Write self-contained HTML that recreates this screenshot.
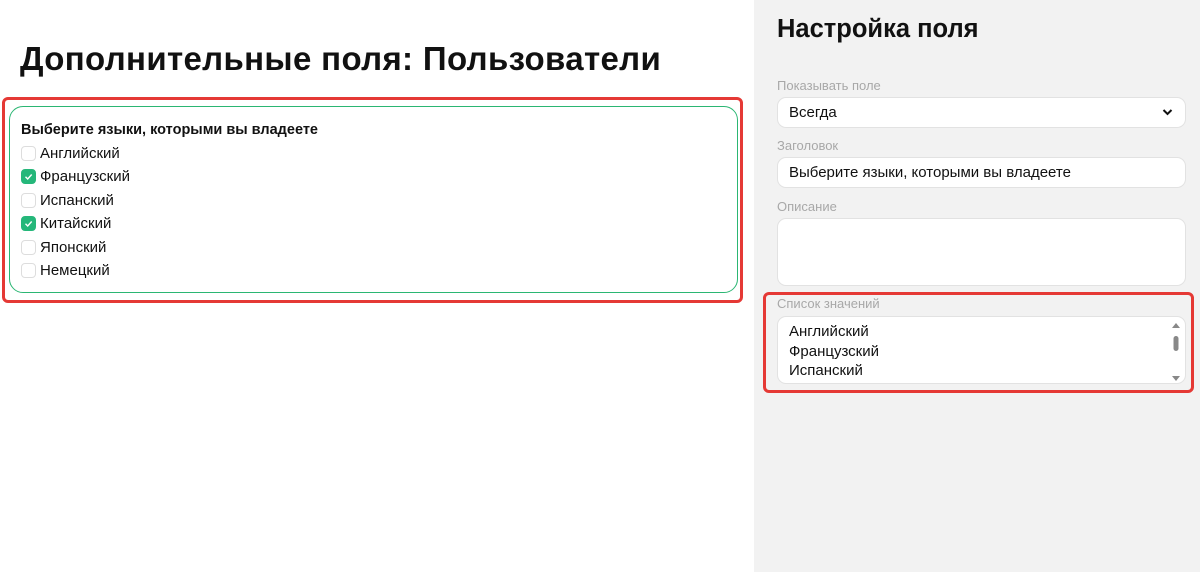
<!DOCTYPE html>
<html><head><meta charset="utf-8"><style>
*{margin:0;padding:0;box-sizing:border-box}
body{width:1200px;height:572px;position:relative;background:#fff;font-family:"Liberation Sans",sans-serif;color:#111;overflow:hidden}
.a{position:absolute;white-space:nowrap}
.right{position:absolute;left:754px;top:0;width:446px;height:572px;background:#f2f2f2}
.lbl{position:absolute;font-size:13px;color:#a8a8a8;left:777px}
.box{position:absolute;left:777px;width:409px;background:#fff;border:1px solid #e2e2e2;border-radius:9px;font-size:15px;padding-left:11px}
.cb{position:absolute;left:21px;width:15px;height:15px;border:1px solid #ddd;border-radius:4px;background:#fff}
.cb.on{background:#25b77a;border-color:#25b77a}
.it{position:absolute;left:40px;font-size:15px}
</style></head><body>
<div class="a" style="left:20px;top:40px;font-size:33px;font-weight:bold;letter-spacing:0.35px">Дополнительные поля: Пользователи</div>
<div class="a" style="left:2px;top:97px;width:741px;height:206px;border:3px solid #e53935;border-radius:6px"></div>
<div class="a" style="left:9px;top:106px;width:729px;height:187px;border:1.5px solid #2bb673;border-radius:14px"></div>
<div class="a" style="left:21px;top:122px;font-size:14.5px;font-weight:bold">Выберите языки, которыми вы владеете</div>
<div class="cb" style="top:146px"></div><div class="it" style="top:145px">Английский</div>
<div class="cb on" style="top:169px"><svg width="13" height="13" viewBox="0 0 13 13"><path d="M3.5 6.8l2.2 2.2 4-4.5" stroke="#fff" stroke-width="1.4" fill="none"/></svg></div><div class="it" style="top:168px">Французский</div>
<div class="cb" style="top:193px"></div><div class="it" style="top:192px">Испанский</div>
<div class="cb on" style="top:216px"><svg width="13" height="13" viewBox="0 0 13 13"><path d="M3.5 6.8l2.2 2.2 4-4.5" stroke="#fff" stroke-width="1.4" fill="none"/></svg></div><div class="it" style="top:215px">Китайский</div>
<div class="cb" style="top:240px"></div><div class="it" style="top:239px">Японский</div>
<div class="cb" style="top:263px"></div><div class="it" style="top:262px">Немецкий</div>

<div class="right"></div>
<div class="a" style="left:777px;top:15px;font-size:25.5px;font-weight:bold">Настройка поля</div>
<div class="lbl" style="top:78px">Показывать поле</div>
<div class="box" style="top:97px;height:31px;line-height:29px">Всегда<svg style="position:absolute;right:12px;top:10px" width="11" height="8" viewBox="0 0 11 8"><path d="M1.5 2l4 4 4-4" stroke="#111" stroke-width="2" fill="none"/></svg></div>
<div class="lbl" style="top:138px">Заголовок</div>
<div class="box" style="top:157px;height:31px;line-height:29px">Выберите языки, которыми вы владеете</div>
<div class="lbl" style="top:199px">Описание</div>
<div class="box" style="top:218px;height:68px"></div>
<div class="a" style="left:763px;top:292px;width:431px;height:101px;border:3px solid #e53935;border-radius:6px"></div>
<div class="lbl" style="top:296px">Список значений</div>
<div class="box" style="top:316px;height:68px;padding-top:5px;line-height:19.5px">Английский<br>Французский<br>Испанский
<svg style="position:absolute;right:4px;top:4px" width="10" height="60" viewBox="0 0 10 60"><path d="M1 7l4-5 4 5z" fill="#888"/><rect x="2.5" y="15" width="5" height="15" rx="2.5" fill="#888"/><path d="M1 55l4 5 4-5z" fill="#888"/></svg></div>
</body></html>
